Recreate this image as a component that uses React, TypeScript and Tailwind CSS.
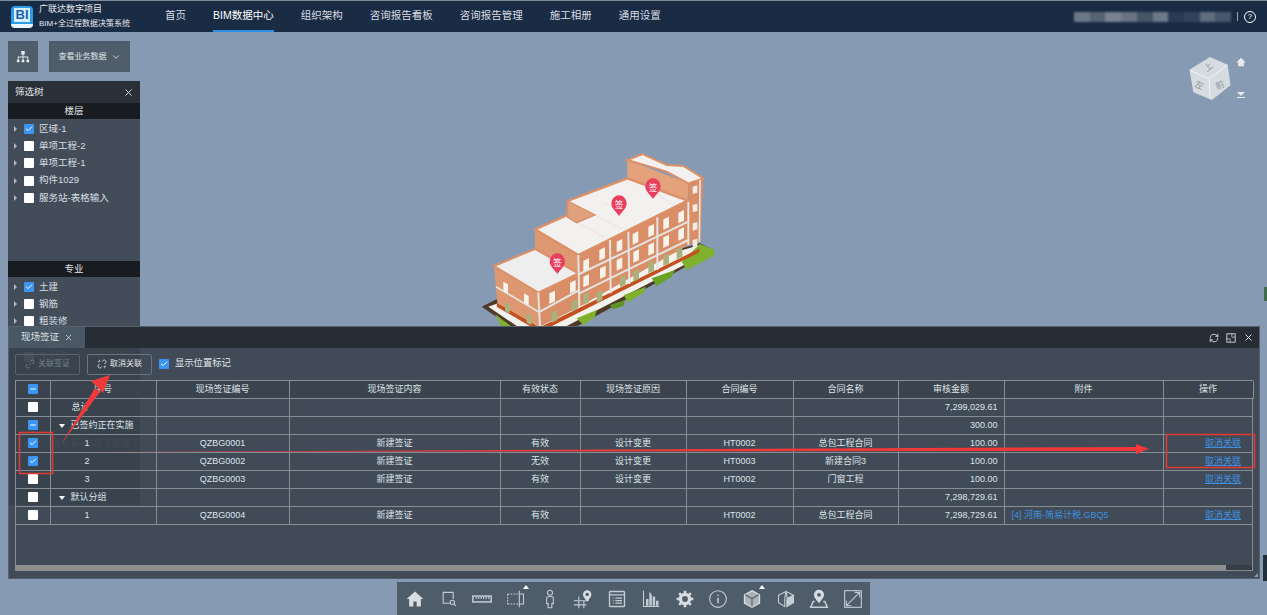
import { Check, ChevronDown, Minus, X, RefreshCw } from "lucide-react";

const NAV = ["首页", "BIM数据中心", "组织架构", "咨询报告看板", "咨询报告管理", "施工相册", "通用设置"];
const FLOORS = [
  { name: "区域-1", checked: true },
  { name: "单项工程-2" },
  { name: "单项工程-1" },
  { name: "构件1029" },
  { name: "服务站-表格输入" },
];
const MAJORS = [{ name: "土建", checked: true }, { name: "钢筋" }, { name: "粗装修" }];
const COLS = [34, 106, 133, 211, 80, 106, 107, 105, 106, 159, 90];
const HEAD = ["序号", "现场签证编号", "现场签证内容", "有效状态", "现场签证原因", "合同编号", "合同名称", "审核金额", "附件", "操作"];

type Row = {
  check: "on" | "off" | "part";
  group?: string;
  no?: string;
  code?: string;
  body?: string;
  state?: string;
  reason?: string;
  contract?: string;
  cname?: string;
  amount?: string;
  file?: string;
  op?: boolean;
};

const ROWS: Row[] = [
  { check: "off", no: "总计", amount: "7,299,029.61" },
  { check: "part", group: "已签约正在实施", amount: "300.00" },
  { check: "on", no: "1", code: "QZBG0001", body: "新建签证", state: "有效", reason: "设计变更", contract: "HT0002", cname: "总包工程合同", amount: "100.00", op: true },
  { check: "on", no: "2", code: "QZBG0002", body: "新建签证", state: "无效", reason: "设计变更", contract: "HT0003", cname: "新建合同3", amount: "100.00", op: true },
  { check: "off", no: "3", code: "QZBG0003", body: "新建签证", state: "有效", reason: "设计变更", contract: "HT0002", cname: "门窗工程", amount: "100.00", op: true },
  { check: "off", group: "默认分组", amount: "7,298,729.61" },
  { check: "off", no: "1", code: "QZBG0004", body: "新建签证", state: "有效", contract: "HT0002", cname: "总包工程合同", amount: "7,298,729.61", file: "[4] 河南-简易计税.GBQ5", op: true },
];

// windows on the long front of the building: x, y in zoomed model coords
const FRONT_WINDOWS = [
  [388, 490], [450, 458], [490, 392], [538, 360], [590, 335], [638, 312], [685, 290], [730, 268], [775, 248],
  [490, 440], [540, 415], [590, 390], [640, 366], [685, 345], [730, 322], [775, 300],
];
const GREEN_WINDOWS = [[395, 548], [455, 515], [490, 495], [530, 488], [600, 442], [640, 425], [685, 400], [730, 378], [770, 358]];

function Box({ state, size = "w-[10px] h-[10px]" }: { state: "on" | "off" | "part"; size?: string }) {
  if (state === "off") return <span className={`${size} inline-flex shrink-0 rounded-[1px] bg-white`} />;
  return (
    <span className={`${size} inline-flex shrink-0 items-center justify-center rounded-[1px] bg-[#3a96f2] text-white`}>
      {state === "on" ? <Check size={8} strokeWidth={3} /> : <Minus size={8} strokeWidth={3} />}
    </span>
  );
}

function TreeRow({ name, checked }: { name: string; checked?: boolean }) {
  return (
    <div className="flex h-[17.3px] items-center pl-[6px] text-[9.500px] text-[#d8dde2]">
      <span className="mr-[7px] h-0 w-0 border-y-[3px] border-l-[3px] border-y-transparent border-l-[#aeb6bf]" />
      <Box state={checked ? "on" : "off"} size="w-[10px] h-[10px]" />
      <span className="ml-[5px] whitespace-nowrap">{name}</span>
    </div>
  );
}

function Building() {
  return (
    <svg viewBox="0 0 960 660" className="h-[220px] w-[320px]">
      <polygon points="185,530 225,510 840,340 885,362 360,650" fill="#4d3a28" />
      <polygon points="205,530 238,518 840,345 875,362 355,632" fill="#f3f1ee" />
      <polygon points="225,552 275,590 245,590" fill="#7fb12c" />
      <polygon points="470,565 530,540 525,560 490,585" fill="#7fb12c" />
      <polygon points="570,525 615,510 610,528 578,538" fill="#5f9422" />
      <polygon points="612,495 678,470 670,490 622,517" fill="#7fb12c" />
      <polygon points="695,445 765,420 755,440 710,468" fill="#6ba226" />
      <polygon points="785,395 840,342 885,360 880,378 800,420" fill="#7fb12c" />
      <polygon points="232,518 360,592 840,355 836,368 360,606 230,530" fill="#c5501f" />
      <polygon points="222,408 355,488 360,590 232,520" fill="#dd9871" />
      <polygon points="355,488 475,430 478,530 360,590" fill="#d98e67" />
      <polygon points="345,298 475,375 475,430 345,360" fill="#dd9871" />
      <polygon points="475,375 803,212 805,345 478,530" fill="#d98e67" />
      <polygon points="622,90 805,160 803,212 622,143" fill="#e3a27c" />
      <polygon points="805,160 850,145 842,335 805,345" fill="#d98e67" />
      <polygon points="222,408 345,357 475,430 355,488" fill="#efeeee" stroke="#dd9068" strokeWidth="6" />
      <polygon points="345,298 443,255 443,213 622,145 803,212 475,375" fill="#f2f1f0" stroke="#dd9068" strokeWidth="7" />
      <path d="M525,255 610,298 M470,278 560,325 M545,215 610,250 M680,170 760,225" stroke="#efd9c8" strokeWidth="2" fill="none" />
      <polygon points="622,90 668,72 740,105 790,108 850,145 805,160 740,125 690,110" fill="#f3f2f1" stroke="#dd9068" strokeWidth="6" />
      <polygon points="443,213 525,255 470,278 443,262" fill="#e0a27e" stroke="#d98e67" strokeWidth="4" />
      <path d="M475,375 478,530 M570,330 572,490 M625,305 628,462 M712,262 712,420 M805,215 805,345 M355,488 360,590 M478,432 805,275 M360,545 478,480 M478,490 805,330" stroke="#e4e4e2" strokeWidth="6" fill="none" />
      <path d="M228,470 355,545 M840,150 838,335" stroke="#e4e4e2" strokeWidth="5" fill="none" />
      {FRONT_WINDOWS.map(([x, y]) => (
        <polygon key={`${x}-${y}`} points={`${x},${y} ${x + 17},${y - 8} ${x + 17},${y + 24} ${x},${y + 32}`} fill="#f6f3ec" />
      ))}
      {GREEN_WINDOWS.map(([x, y]) => (
        <polygon key={`${x}-${y}`} points={`${x},${y} ${x + 17},${y - 8} ${x + 17},${y + 22} ${x},${y + 30}`} fill="#a9b27d" />
      ))}
      {[[250, 455], [312, 490], [255, 515], [320, 550]].map(([x, y], i) => (
        <polygon key={x} points={`${x},${y} ${x + 14},${y + 8} ${x + 14},${y + 36} ${x},${y + 28}`} fill={i < 2 ? "#f6f3ec" : "#a9b27d"} />
      ))}
      {[[818, 170], [818, 225], [818, 280], [818, 330]].map(([x, y]) => (
        <polygon key={y} points={`${x},${y} ${x + 14},${y - 4} ${x + 14},${y + 18} ${x},${y + 22}`} fill="#f0ede2" />
      ))}
      {[
        [412, 400],
        [597, 226],
        [699, 175],
      ].map(([x, y]) => (
        <g key={x}>
          <path d={`M${x},${y + 32} C${x - 8},${y + 20} ${x - 23},${y + 10} ${x - 23},${y - 6} a23,24 0 1 1 46,0 C${x + 23},${y + 10} ${x + 8},${y + 20} ${x},${y + 32} z`} fill="#ea3e5e" />
          <text x={x} y={y + 8} textAnchor="middle" fontSize="26" fill="#fff">签</text>
        </g>
      ))}
    </svg>
  );
}

function ToolIcon({ children }: { children: React.ReactNode }) {
  return (
    <svg viewBox="0 0 24 24" className="h-[20px] w-[20px]" fill="none" stroke="#c4ccd4" strokeWidth="1.300">
      {children}
    </svg>
  );
}

function BottomTools() {
  return (
    <div className="flex h-[33px] w-[473px] items-center justify-between bg-[#4f5d6b] pl-[8px] pr-[7px]">
      <ToolIcon><path d="M12 3 2 12h3v9h5v-6h4v6h5v-9h3z" fill="#d8dde2" stroke="none" /></ToolIcon>
      <ToolIcon><path d="M14 17H5V4h12v8" /><circle cx="16" cy="16" r="2.600" /><path d="m18 18 2.500 2.500" /></ToolIcon>
      <ToolIcon><rect x="1" y="8.500" width="22" height="7" strokeWidth="1.800" /><path d="M5 9v3M8 9v3M11 9v3M14 9v3M17 9v3M20 9v3" /></ToolIcon>
      <div className="relative">
        <span className="absolute -top-[4px] left-[17px] h-0 w-0 border-x-[3px] border-b-[4px] border-x-transparent border-b-white" />
        <ToolIcon><path d="M2 6h14M2 18h14M2 6v12" strokeDasharray="2 1.500" /><path d="M16 2v20M16 6h5v12h-5" /></ToolIcon>
      </div>
      <ToolIcon><circle cx="12" cy="4.500" r="3" /><path d="M8 10.500c0-2 8-2 8 0v7h-1.800v5H9.800v-5H8z" /></ToolIcon>
      <ToolIcon><path d="M1 14h18M1 19h15M7 9v14M13 14v9" /><path d="M17 15c-3.500-4-5-6-5-8.500a5 5 0 1 1 10 0c0 2.500-1.500 4.500-5 8.500z" fill="#d8dde2" stroke="none" /><circle cx="17" cy="6.500" r="2" fill="#4f5d6b" stroke="none" /></ToolIcon>
      <ToolIcon><rect x="3" y="3" width="18" height="18" rx="1" strokeWidth="1.600" /><path d="M3 7h18M7 11h1M10 11h8M7 14h1M10 14h8M7 17h1M10 17h8" strokeWidth="1.500" /></ToolIcon>
      <ToolIcon><path d="M3 2v19h19" /><path d="M6 20v-8h3v8zM10 20V3l3 4v13zM14 20V9h3v11zM18 20v-6h3v6z" fill="#c4ccd4" stroke="none" /></ToolIcon>
      <ToolIcon><path d="M12 4.500a7.500 7.500 0 1 0 0 15 7.500 7.500 0 0 0 0-15zm0 4a3.500 3.500 0 1 1 0 7 3.500 3.500 0 0 1 0-7z" fill="#d8dde2" stroke="none" /><path d="M12 2v4M12 18v4M2 12h4M18 12h4M5 5l3 3M16 16l3 3M19 5l-3 3M8 16l-3 3" stroke="#d8dde2" strokeWidth="3" /></ToolIcon>
      <ToolIcon><circle cx="12" cy="12" r="10" /><path d="M12 10.500V17M12 7v1.500" strokeWidth="1.800" /></ToolIcon>
      <div className="relative">
        <span className="absolute -top-[4px] left-[17px] h-0 w-0 border-x-[3px] border-b-[4px] border-x-transparent border-b-white" />
        <ToolIcon><path d="m12 2 9 5v10l-9 5-9-5V7z" fill="#aab3bc" stroke="#d8dde2" strokeWidth="1.600" /><path d="m4 7 8 4.500L20 7M12 11.500V21" stroke="#4f5d6b" /></ToolIcon>
      </div>
      <ToolIcon><path d="M12 3 3 7.500v9L10.500 21V11zM12 3l9 4.500-7.500 3.500z" /><path d="M21 8.500v8L13 21V12z" fill="#c4ccd4" /></ToolIcon>
      <ToolIcon><path d="M12 17c-4-5-6-7-6-10a6 6 0 1 1 12 0c0 3-2 5-6 10z" fill="#d8dde2" stroke="none" /><circle cx="12" cy="7" r="2.300" fill="#4f5d6b" stroke="none" /><path d="M7 15H5l-3 7h20l-3-7h-2" strokeWidth="1.800" /></ToolIcon>
      <ToolIcon><rect x="2" y="2" width="20" height="20" /><path d="M14 4h6v6M20 4 4 20M4 14v6h6" /></ToolIcon>
    </div>
  );
}

function VisaPanel() {
  return (
    <div className="relative flex h-full flex-col border border-[#55616e] bg-[#39424d]/90 text-[9px] text-[#dfe3e7]">
      <div className="flex h-[21px] shrink-0 items-center justify-between bg-[#272d35] pr-[5px]">
        <div className="flex h-full w-[76px] items-center justify-center gap-[5px] bg-[#4a5764] text-[9.500px]">
          现场签证 <X size={9} />
        </div>
        <div className="flex items-center gap-[7px] text-[#e6e9ec]">
          <RefreshCw size={10} />
          <svg viewBox="0 0 12 12" className="h-[10px] w-[10px]" fill="none" stroke="currentColor">
            <rect x="1" y="1" width="10" height="10" />
            <path d="M1 7h4v4M7 1v4h4" strokeWidth=".8" />
          </svg>
          <X size={11} />
        </div>
      </div>
      <div className="flex h-[32px] shrink-0 items-center pl-[6px]">
        <button className="flex h-[21px] w-[65px] items-center justify-center gap-[3px] rounded-[2px] border border-[#596470] text-[8px] text-[#77818c]">
          <svg viewBox="0 0 12 12" className="h-[10px] w-[10px]" fill="none" stroke="currentColor"><path d="M5 7 7 5M3 6 1.800 7.200a2 2 0 0 0 3 3L6 9M6 3l1.200-1.200a2 2 0 0 1 3 3L9 6" /></svg>
          关联签证
        </button>
        <button className="ml-[7px] flex h-[21px] w-[65px] items-center justify-center gap-[3px] rounded-[2px] border border-[#6a7580] text-[8px] text-[#e2e6ea]">
          <svg viewBox="0 0 12 12" className="h-[10px] w-[10px]" fill="none" stroke="currentColor"><path d="M3 6 1.800 7.200a2 2 0 0 0 3 3L6 9M6 3l1.200-1.200a2 2 0 0 1 3 3L9 6M1 3l2 .5M3 1l.5 2M9 11l-.5-2M11 9l-2-.5" /></svg>
          取消关联
        </button>
        <span className="ml-[7px] flex"><Box state="on" /></span>
        <span className="ml-[6px] text-[9.300px] text-[#e2e6ea]">显示位置标记</span>
      </div>
      <div className="relative mx-[6px] h-[191px] w-[1238px] border border-[#868d94]">
        <table className="w-[1237px] table-fixed border-collapse [&_td]:pt-[1px] [&_th]:pt-[1px]">
          <colgroup>
            {COLS.map((w, i) => (
              <col key={i} style={{ width: w }} />
            ))}
          </colgroup>
          <thead>
            <tr className="h-[17px] bg-[#3a434e]">
              <th className="border border-[#868d94] border-t-0 border-l-0 p-0">
                <div className="-mt-[1px] flex justify-center"><Box state="part" /></div>
              </th>
              {HEAD.map((h) => (
                <th key={h} className="border border-[#868d94] border-t-0 p-0 font-normal">{h}</th>
              ))}
            </tr>
          </thead>
          <tbody>
            {ROWS.map((r, i) => (
              <tr key={i} className="h-[18px]">
                <td className="border border-[#868d94] border-l-0 p-0">
                  <div className="-mt-[1px] flex justify-center"><Box state={r.check} /></div>
                </td>
                <td className="border border-[#868d94] p-0">
                  {r.group ? (
                    <div className="flex items-center pl-[8px]">
                      <span className="mr-[6px] h-0 w-0 border-x-[3.500px] border-t-[4px] border-x-transparent border-t-white" />
                      <span className="whitespace-nowrap">{r.group}</span>
                    </div>
                  ) : r.no === "总计" ? (
                    <div className="pl-[21px]">{r.no}</div>
                  ) : (
                    <div className="pl-[34px]">{r.no}</div>
                  )}
                </td>
                <td className="border border-[#868d94] p-0 text-center">{r.code}</td>
                <td className="border border-[#868d94] p-0 text-center">{r.body}</td>
                <td className="border border-[#868d94] p-0 text-center">{r.state}</td>
                <td className="border border-[#868d94] p-0 text-center">{r.reason}</td>
                <td className="border border-[#868d94] p-0 text-center">{r.contract}</td>
                <td className="border border-[#868d94] p-0 text-center">{r.cname}</td>
                <td className="border border-[#868d94] p-0 pr-[6px] text-right">{r.amount}</td>
                <td className="border border-[#868d94] p-0 pl-[7px] text-[#3f90e0]">{r.file}</td>
                <td className="border border-[#868d94] border-r-0 p-0 pr-[12px] text-right">
                  {r.op && <a className="text-[#3f90e0] underline">取消关联</a>}
                </td>
              </tr>
            ))}
          </tbody>
        </table>
        <div className="absolute inset-x-0 bottom-0 h-[5px] bg-[#363e48]">
          <div className="h-full w-[1210px] bg-[#8e8e8e]" />
        </div>
      </div>
      <span className="absolute bottom-[1px] right-[1px] h-0 w-0 border-b-[4px] border-l-[4px] border-b-[#8d959d] border-l-transparent" />
    </div>
  );
}

export default function App() {
  return (
    <div
      className="relative flex h-[615px] w-[1267px] flex-col overflow-hidden bg-[#869bb3]"
      style={{ fontFamily: '"Liberation Sans", "Noto Sans CJK SC", sans-serif' }}
    >
      <header className="flex h-[32px] shrink-0 items-center border-t border-[#7f8b98] bg-[#1a2b44] text-white">
        <div className="ml-[11px] flex h-[22px] w-[22px] flex-col items-center justify-end overflow-hidden rounded-[4px] bg-[#2d9ce8]">
          <span className="flex h-[14px] w-[16px] items-center justify-center bg-[#d8eefc] text-[13px] leading-none font-bold text-[#1c63ad]">BI</span>
          <span className="mt-[2px] h-[4px] w-full bg-[#eaf5fc]" />
        </div>
        <div className="ml-[6px] w-[112px] text-[#e6eaee]">
          <div className="text-[9px] leading-[15px]">广联达数字项目</div>
          <div className="text-[8px] leading-[14px] whitespace-nowrap">BIM+全过程数据决策系统</div>
        </div>
        <nav className="ml-[14px] flex h-full gap-[27px] text-[10.500px] text-[#d9dee4]">
          {NAV.map((n) => (
            <div
              key={n}
              className={`flex h-full items-center whitespace-nowrap border-b-[2px] ${n === "BIM数据中心" ? "border-[#2f8fe8] text-white" : "border-transparent"}`}
            >
              {n}
            </div>
          ))}
        </nav>
        <div className="ml-auto flex items-center pr-[11px]">
          <div className="flex h-[10px] w-[157px] opacity-70 blur-[1px]">
            {["#8f9aa6", "#6e7b8a", "#a0a8b3", "#8a93a1", "#596878", "#8f9aa6", "#31445c", "#3c4f66", "#7d8a98", "#5a6b7d"].map((c, i) => (
              <div key={i} className="h-full flex-1" style={{ background: c }} />
            ))}
          </div>
          <span className="mx-[6px] h-[9px] w-px bg-[#9aa5b1]" />
          <span className="flex h-[12px] w-[12px] items-center justify-center rounded-full border border-white text-[8px]">?</span>
        </div>
      </header>

      <main className="relative flex-1">
        {/* top left buttons */}
        <div className="absolute left-[8px] top-[9px] flex gap-[11px]">
          <div className="flex h-[31px] w-[30px] items-center justify-center bg-[#4f5d6b]">
            <svg viewBox="0 0 16 16" className="h-[14px] w-[14px]" fill="#e6e9ec">
              <path d="M6 1h4v4H8.500v2.500H14V11h-1V8.500H8.500V11h-1V8.500H3V11H2V7.500h5.500V5H6z" />
              <rect x="1" y="11" width="3" height="3" /><rect x="6.500" y="11" width="3" height="3" /><rect x="12" y="11" width="3" height="3" />
            </svg>
          </div>
          <div className="flex h-[31px] w-[81px] items-center justify-center gap-[4px] bg-[#4f5d6b] text-[8px] text-[#dfe3e7]">
            查看业务数据 <ChevronDown size={10} />
          </div>
        </div>

        {/* filter tree */}
        <div className="absolute left-[8px] top-[49px] flex h-[424px] w-[132px] flex-col bg-[#404a56]/[.97] text-[#e3e6ea]">
          <div className="flex h-[22px] shrink-0 items-center justify-between bg-[#2a3037] pl-[7px] pr-[6px] text-[9.500px]">
            筛选树 <X size={11} />
          </div>
          <div className="flex h-[16px] shrink-0 items-center justify-center bg-[#181c20] text-[9.500px]">楼层</div>
          <div className="h-[142px] pt-[1px]">
            {FLOORS.map((f) => (
              <TreeRow key={f.name} {...f} />
            ))}
          </div>
          <div className="flex h-[16px] shrink-0 items-center justify-center bg-[#181c20] text-[9.500px]">专业</div>
          <div className="pt-[1px]">
            {MAJORS.map((f) => (
              <TreeRow key={f.name} {...f} />
            ))}
          </div>
          <div className="mt-[18px] opacity-60">
            <TreeRow name="未识别" />
          </div>
          <div className="mt-[71px] flex h-[14px] items-center whitespace-nowrap pl-[16px] text-[9.500px] text-[#7b8590]">
            <span className="mr-[5px] h-[10px] w-[10px] bg-[#5f6a75]" />总平面布置图(地下室施工
          </div>
        </div>

        {/* nav cube */}
        <div className="absolute left-[1188px] top-[24px] flex">
          <svg viewBox="0 0 44 46" className="h-[45px] w-[44px]">
            <polygon points="22,1 40,9 43,30 24,45 5,37 1,14" fill="#d6dbe0" />
            <path d="M2,15 21,23 40,9 M21,23 22,44" stroke="#f0f2f4" strokeWidth="1" fill="none" />
            <text x="21" y="14" fontSize="9" fill="#8d949c" textAnchor="middle" transform="rotate(-40 21 12)">上</text>
            <text x="11" y="33" fontSize="9" fill="#8d949c" textAnchor="middle" transform="rotate(20 11 30)">左</text>
            <text x="32" y="33" fontSize="9" fill="#8d949c" textAnchor="middle" transform="rotate(-20 32 30)">前</text>
          </svg>
          <div className="ml-[4px] flex flex-col items-center justify-between pb-[3px] pt-[1px]">
            <svg viewBox="0 0 12 12" className="h-[10px] w-[10px]" fill="#e8ebee"><path d="M6 1 .5 6.500h2V11h7V6.500h2z" /></svg>
            <div className="flex flex-col items-center gap-[1px]">
              <span className="h-0 w-0 border-x-[4px] border-t-[4px] border-x-transparent border-t-[#e8ebee]" />
              <span className="h-px w-[8px] bg-[#e8ebee]" />
            </div>
          </div>
        </div>

        {/* model */}
        <div className="absolute left-[420px] top-[98px]">
          <Building />
        </div>

        {/* visa panel */}
        <div className="absolute left-[8px] top-[294px] h-[253px] w-[1252px]">
          <VisaPanel />
        </div>

        {/* bottom toolbar */}
        <div className="absolute left-[397px] top-[550px]">
          <BottomTools />
        </div>

        {/* bits of the window behind, at the right edge */}
        <div className="absolute left-[1263px] top-[523px] h-[26px] w-[4px] bg-[#22303c]" />
        <div className="absolute left-[1264px] top-[255px] h-[14px] w-[3px] bg-[#3f6b4a]" />
      </main>

      {/* red annotations drawn over the screenshot */}
      <svg className="pointer-events-none absolute left-0 top-0 h-[615px] w-[1267px]" viewBox="0 0 1267 615" fill="none">
        <rect x="19.500" y="432.500" width="33" height="41" stroke="#e53935" strokeWidth="1.500" />
        <rect x="1166.500" y="434.500" width="88" height="33" stroke="#e53935" strokeWidth="1.500" />
        <polygon points="62,443 95,388 100,392" fill="#f03a3a" />
        <polygon points="110,375 91,381 103,393" fill="#f03a3a" />
        <polygon points="73,452 1138,447 1138,451" fill="#f03a3a" />
        <polygon points="1149,449 1136,444 1136,454" fill="#f03a3a" />
      </svg>
    </div>
  );
}
